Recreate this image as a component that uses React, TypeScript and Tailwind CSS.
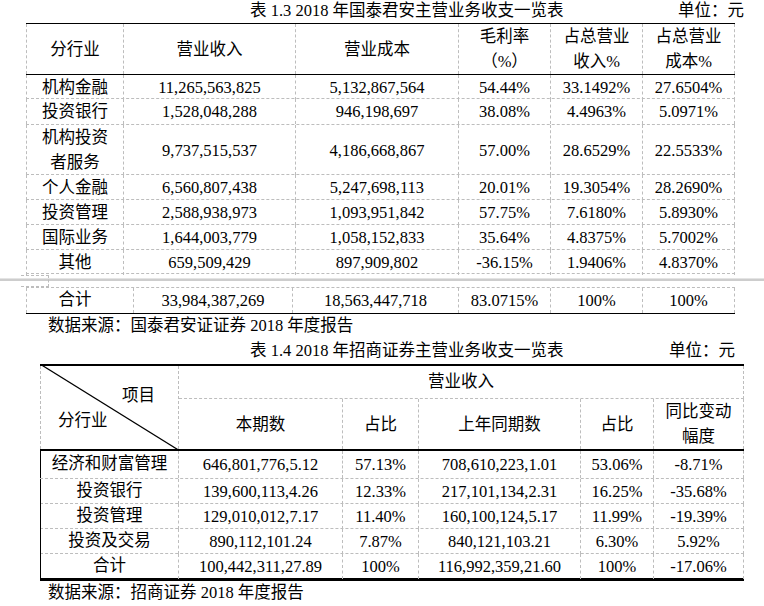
const FONT = "font-['Liberation_Serif','Noto_Sans_CJK_SC',serif]";
const DASH = "border-dashed border-[#bdbdbd]";

type TopRow = { name: string[]; cells: string[]; h: string };

const topRows: TopRow[] = [
  { name: ["机构金融"], cells: ["11,265,563,825", "5,132,867,564", "54.44%", "33.1492%", "27.6504%"], h: "h-[24px]" },
  { name: ["投资银行"], cells: ["1,528,048,288", "946,198,697", "38.08%", "4.4963%", "5.0971%"], h: "h-[26px]" },
  { name: ["机构投资", "者服务"], cells: ["9,737,515,537", "4,186,668,867", "57.00%", "28.6529%", "22.5533%"], h: "h-[50px]" },
  { name: ["个人金融"], cells: ["6,560,807,438", "5,247,698,113", "20.01%", "19.3054%", "28.2690%"], h: "h-[25px]" },
  { name: ["投资管理"], cells: ["2,588,938,973", "1,093,951,842", "57.75%", "7.6180%", "5.8930%"], h: "h-[25px]" },
  { name: ["国际业务"], cells: ["1,644,003,779", "1,058,152,833", "35.64%", "4.8375%", "5.7002%"], h: "h-[25px]" },
  { name: ["其他"], cells: ["659,509,429", "897,909,802", "-36.15%", "1.9406%", "4.8370%"], h: "h-[24px]" },
];

const bottomRows = [
  { cells: ["经济和财富管理", "646,801,776,5.12", "57.13%", "708,610,223,1.01", "53.06%", "-8.71%"], h: "h-[28px] border-b" },
  { cells: ["投资银行", "139,600,113,4.26", "12.33%", "217,101,134,2.31", "16.25%", "-35.68%"], h: "h-[25px] border-b" },
  { cells: ["投资管理", "129,010,012,7.17", "11.40%", "160,100,124,5.17", "11.99%", "-19.39%"], h: "h-[25px] border-b" },
  { cells: ["投资及交易", "890,112,101.24", "7.87%", "840,121,103.21", "6.30%", "5.92%"], h: "h-[25px] border-b" },
  { cells: ["合计", "100,442,311,27.89", "100%", "116,992,359,21.60", "100%", "-17.06%"], h: "h-[24px]" },
];

function Cell({ lines, first }: { lines: string[]; first?: boolean }) {
  return (
    <div
      className={`flex flex-col items-center justify-center border-r ${DASH} leading-[25px] ${
        first ? "border-l" : ""
      }`}
    >
      {lines.map((l) => (
        <span key={l}>{l}</span>
      ))}
    </div>
  );
}

function GuotaiTable() {
  return (
    <div className="ml-[26px] w-[709px]">
      <div className="h-px bg-black" />
      <div className="grid h-[50px] grid-cols-[98px_172px_163px_92px_92px_92px]">
        <Cell first lines={["分行业"]} />
        <Cell lines={["营业收入"]} />
        <Cell lines={["营业成本"]} />
        <Cell lines={["毛利率", "（%）"]} />
        <Cell lines={["占总营业", "收入%"]} />
        <Cell lines={["占总营业", "成本%"]} />
      </div>
      <div className="h-px bg-black" />
      {topRows.map((r) => (
        <div
          key={r.name.join("")}
          className={`grid grid-cols-[98px_172px_163px_92px_92px_92px] border-b ${DASH} ${r.h}`}
        >
          <Cell first lines={r.name} />
          {r.cells.map((c) => (
            <Cell key={c} lines={[c]} />
          ))}
        </div>
      ))}
    </div>
  );
}

function PageBreak() {
  return (
    <div className="relative flex h-[13px] flex-col pt-[4px]">
      <div className="h-px bg-[#e4e4e4]" />
      <div className="h-[2px] bg-[#cdcdcd]" />
      <div className={`absolute left-[21px] top-[1px] h-[12px] w-[28px] border-y border-r ${DASH}`} />
    </div>
  );
}

function GuotaiTotal() {
  return (
    <div className="ml-[26px] w-[709px]">
      <div className={`grid h-[26px] grid-cols-[108px_159px_166px_92px_92px_92px] border-t ${DASH}`}>
        <div className={`flex items-center justify-center border-x pr-[10px] ${DASH}`}>合计</div>
        <Cell lines={["33,984,387,269"]} />
        <Cell lines={["18,563,447,718"]} />
        <Cell lines={["83.0715%"]} />
        <Cell lines={["100%"]} />
        <Cell lines={["100%"]} />
      </div>
      <div className="h-px bg-black" />
    </div>
  );
}

function ZhaoshangTable() {
  return (
    <div className="ml-[40px] w-[704px]">
      <div className="h-[2px] bg-black" />
      <div className="flex h-[83px]">
        <div className={`relative flex w-[139px] flex-col border-x ${DASH} leading-[25px]`}>
          <span className="ml-[81px] mt-[17px]">项目</span>
          <span className="ml-[17px]">分行业</span>
          <svg className="absolute left-[-1px] top-[-2px]" width="140" height="87" viewBox="0 0 140 87">
            <line x1="0" y1="0" x2="140" y2="87" stroke="#000" strokeWidth="1.2" />
          </svg>
        </div>
        <div className="flex w-[565px] flex-col">
          <div className={`flex h-[34px] items-center justify-center border-b border-r ${DASH}`}>营业收入</div>
          <div className="grid flex-1 grid-cols-[164px_76px_162px_73px_90px]">
            <Cell lines={["本期数"]} />
            <Cell lines={["占比"]} />
            <Cell lines={["上年同期数"]} />
            <Cell lines={["占比"]} />
            <Cell lines={["同比变动", "幅度"]} />
          </div>
        </div>
      </div>
      <div className="h-[2px] bg-black" />
      {bottomRows.map((r) => (
        <div
          key={r.cells[0]}
          className={`grid grid-cols-[139px_164px_76px_162px_73px_90px] ${DASH} ${r.h}`}
        >
          <div className={`flex items-center justify-center border-r ${DASH} border-l border-l-black [border-left-style:solid]`}>
            {r.cells[0]}
          </div>
          {r.cells.slice(1).map((c, i) => (
            <Cell key={i} lines={[c]} />
          ))}
        </div>
      ))}
      <div className="h-[3px] bg-black" />
    </div>
  );
}

export default function App() {
  return (
    <div className={`relative h-[606px] w-[764px] overflow-hidden bg-white text-[16.5px] text-black ${FONT}`}>
      <div className="flex h-[23px] items-center">
        <span className="ml-[250px]">表 1.3 2018 年国泰君安主营业务收支一览表</span>
        <span className="ml-auto mr-[20px]">单位：元</span>
      </div>
      <GuotaiTable />
      <PageBreak />
      <GuotaiTotal />
      <div className="flex h-[24px] items-center pl-[48px]">数据来源：国泰君安证证券 2018 年度报告</div>
      <div className="flex h-[26px] items-center">
        <span className="ml-[250px]">表 1.4 2018 年招商证券主营业务收支一览表</span>
        <span className="ml-auto mr-[29px]">单位：元</span>
      </div>
      <ZhaoshangTable />
      <div className="flex h-[24px] items-center pl-[48px]">数据来源：招商证券 2018 年度报告</div>
    </div>
  );
}
